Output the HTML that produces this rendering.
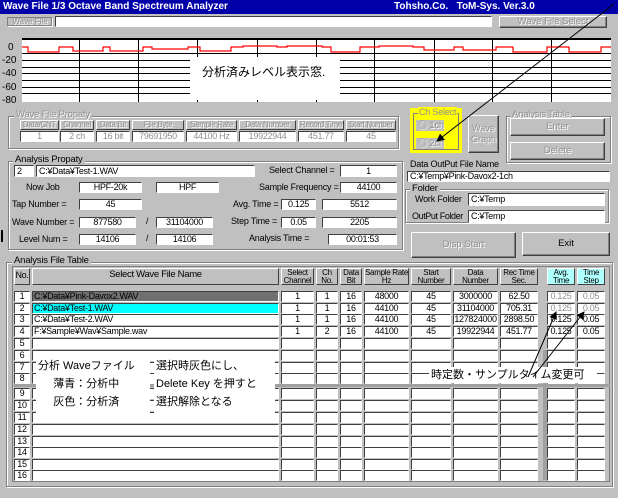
<!DOCTYPE html>
<html><head><meta charset="utf-8"><style>
*{box-sizing:border-box;margin:0;padding:0}
body{width:618px;height:498px;background:#c0c0c0;font-family:"Liberation Sans","Noto Sans CJK JP",sans-serif;font-size:9px;color:#000;position:relative;overflow:hidden}
.a{position:absolute}
.s{position:absolute;background:#fff;border:1px solid;border-color:#404040 #fff #fff #404040;font-size:9px;line-height:9px;text-align:center;white-space:nowrap;overflow:hidden;letter-spacing:-0.3px}
.sl{text-align:left;padding-left:2px}
.g{position:absolute;border:1px solid;border-color:#808080 #fff #fff #808080;box-shadow:inset -1px -1px 0 #808080, inset 1px 1px 0 #fff}
.gl{position:absolute;background:#c0c0c0;padding:0 2px;font-size:9.5px;line-height:10px;letter-spacing:-0.2px}
.b{position:absolute;background:#c0c0c0;border:1px solid;border-color:#fff #404040 #404040 #fff;box-shadow:inset -1px -1px 0 #808080;text-align:center;font-size:9.5px;color:#909090;text-shadow:1px 1px 0 #fff}
.d{color:#909090;text-shadow:1px 1px 0 #fff}
.h{position:absolute;background:#c0c0c0;border:1px solid;border-color:#fff #404040 #404040 #fff;font-size:8px;line-height:8px;text-align:center;overflow:hidden;letter-spacing:-0.3px;white-space:nowrap}
.r{position:absolute;left:12px;width:598px;height:11px}
.r div{position:absolute;top:0;height:11px;background:#fff;border:1px solid;border-color:#404040 #fff #fff #404040;font-size:9px;line-height:9px;text-align:center;white-space:nowrap;overflow:hidden;letter-spacing:-0.3px}
.c0{left:2px;width:16px}.c1{left:20px;width:247px;text-align:left!important;padding-left:1px}.c2{left:269px;width:33px}.c3{left:304px;width:22px}.c4{left:328px;width:22px}.c5{left:352px;width:45px}.c6{left:399px;width:40px}.c7{left:441px;width:45px}.c8{left:488px;width:38px}.c9{left:535px;width:28px}.c10{left:565px;width:28px}
.lab{position:absolute;font-size:9px;white-space:nowrap;letter-spacing:-0.2px}
.note{position:absolute;background:#fff;font-size:11px;line-height:18px;white-space:nowrap}
</style></head><body>
<div class="a" style="left:0;top:0;width:618px;height:14px;background:#0000a8;color:#fff;font-weight:bold;font-size:10px;line-height:14px;padding-left:3px">Wave File 1/3 Octave Band Spectreum Analyzer<span class="a" style="left:394px;top:0">Tohsho.Co.&nbsp;&nbsp;&nbsp;ToM-Sys. Ver.3.0</span></div>
<div class="b" style="left:7px;top:17px;width:46px;height:10px;font-size:8px;line-height:8px;border-color:#808080 #fff #fff #808080">Wave File</div>
<div class="s" style="left:55px;top:16px;width:437px;height:11px"></div>
<div class="b" style="left:499px;top:16px;width:108px;height:12px;line-height:10px">Wave File Select</div>
<svg class="a" style="left:0;top:36px" width="618" height="68">
<rect x="22" y="2" width="589" height="64" fill="#fff"/>
<g stroke="#000" stroke-width="1">
<line x1="22" y1="3" x2="611" y2="3" stroke-width="2"/>
<line x1="22" y1="17.5" x2="611" y2="17.5"/><line x1="22" y1="24.5" x2="611" y2="24.5"/><line x1="22" y1="31.5" x2="611" y2="31.5"/><line x1="22" y1="37.5" x2="611" y2="37.5"/><line x1="22" y1="44.5" x2="611" y2="44.5"/><line x1="22" y1="51.5" x2="611" y2="51.5"/><line x1="22" y1="57.5" x2="611" y2="57.5"/>
<line x1="79.5" y1="3" x2="79.5" y2="66"/><line x1="138.5" y1="3" x2="138.5" y2="66"/><line x1="197.5" y1="3" x2="197.5" y2="66"/><line x1="257.5" y1="3" x2="257.5" y2="66"/><line x1="316.5" y1="3" x2="316.5" y2="66"/><line x1="374.5" y1="3" x2="374.5" y2="66"/><line x1="434.5" y1="3" x2="434.5" y2="66"/><line x1="492.5" y1="3" x2="492.5" y2="66"/><line x1="551.5" y1="3" x2="551.5" y2="66"/>
</g>
<path fill="none" stroke="#f00" stroke-width="1.2" d="M22 11H28V16H59V11H73V15H103V11H110V15H143V11H152V13H188V11H200V15H231V11H243V10H277V11H287V10H322V11H331V16H360V11H379V10H413V11H424V14H454V11H463V14H496V11H513V16H547V11H569V16H601V11H611"/>
<text x="8" y="14" font-size="10" font-family="Liberation Sans">0</text>
<text x="2" y="27" font-size="10" font-family="Liberation Sans">-20</text>
<text x="2" y="40" font-size="10" font-family="Liberation Sans">-40</text>
<text x="2" y="54" font-size="10" font-family="Liberation Sans">-60</text>
<text x="2" y="67" font-size="10" font-family="Liberation Sans">-80</text>
</svg>
<div class="note" style="left:190px;top:57px;width:150px;height:43px;padding:6px 0 0 12px;font-size:12px">分析済みレベル表示窓.</div>
<div class="g" style="left:8px;top:116px;width:392px;height:34px"></div>
<div class="gl d" style="left:14px;top:110px">Wave File Propaty</div>
<div class="h d" style="left:20px;top:120px;width:39px;height:10px">Data/CNT</div>
<div class="h d" style="left:60px;top:120px;width:34px;height:10px">Channel</div>
<div class="h d" style="left:96px;top:120px;width:34px;height:10px">Data Bit</div>
<div class="h d" style="left:132px;top:120px;width:52px;height:10px">File Byte</div>
<div class="h d" style="left:186px;top:120px;width:51px;height:10px">Sample Rate</div>
<div class="h d" style="left:239px;top:120px;width:57px;height:10px">Data Number</div>
<div class="h d" style="left:298px;top:120px;width:46px;height:10px">Record Time</div>
<div class="h d" style="left:346px;top:120px;width:50px;height:10px">Start Number</div>
<div class="s d" style="left:20px;top:131px;width:39px;height:11px">1</div>
<div class="s d" style="left:60px;top:131px;width:34px;height:11px">2 ch</div>
<div class="s d" style="left:96px;top:131px;width:34px;height:11px">16 bit</div>
<div class="s d" style="left:132px;top:131px;width:52px;height:11px">79691950</div>
<div class="s d" style="left:186px;top:131px;width:51px;height:11px">44100 Hz</div>
<div class="s d" style="left:239px;top:131px;width:57px;height:11px">19922944</div>
<div class="s d" style="left:298px;top:131px;width:46px;height:11px">451.77</div>
<div class="s d" style="left:346px;top:131px;width:50px;height:11px">45</div>
<div class="a" style="left:410px;top:108px;width:52px;height:45px;background:#ff0"></div>
<div class="a" style="left:413px;top:113px;width:46px;height:37px;border:1px solid #808080"></div>
<div class="lab" style="left:418px;top:107px;background:#ff0;padding:0 1px;color:#909090">Ch Select</div>
<div class="a d" style="left:416px;top:120px;width:28px;height:11px;background:#c0c0c0;font-size:9px;line-height:11px;padding-left:2px">◎ 1ch</div>
<div class="a d" style="left:416px;top:138px;width:28px;height:11px;background:#c0c0c0;font-size:9px;line-height:11px;padding-left:2px">◎ 2ch</div>
<div class="b" style="left:468px;top:115px;width:31px;height:38px;font-size:9px;line-height:11px;padding-top:7px">Wave<br>Graph</div>
<div class="g" style="left:506px;top:116px;width:106px;height:48px"></div>
<div class="gl d" style="left:510px;top:110px">Analysis Table</div>
<div class="b" style="left:510px;top:118px;width:95px;height:18px;line-height:15px">Enter</div>
<div class="b" style="left:510px;top:142px;width:95px;height:18px;line-height:15px">Delete</div>
<div class="g" style="left:8px;top:161px;width:396px;height:90px"></div>
<div class="gl" style="left:13px;top:155px">Analysis Propaty</div>
<div class="s sl" style="left:14px;top:165px;width:20px;height:12px;line-height:10px">2</div>
<div class="s sl" style="left:36px;top:165px;width:219px;height:12px;line-height:10px">C:¥Data¥Test-1.WAV</div>
<div class="lab" style="left:269px;top:165px">Select Channel =</div>
<div class="s" style="left:340px;top:165px;width:57px;height:12px;line-height:10px">1</div>
<div class="lab" style="left:26px;top:182px">Now Job</div>
<div class="s" style="left:79px;top:182px;width:63px;height:11px">HPF-20k</div>
<div class="s" style="left:156px;top:182px;width:63px;height:11px">HPF</div>
<div class="lab" style="left:259px;top:182px">Sample Frequency =</div>
<div class="s" style="left:340px;top:182px;width:57px;height:11px">44100</div>
<div class="lab" style="left:12px;top:199px">Tap Number =</div>
<div class="s" style="left:79px;top:199px;width:63px;height:11px">45</div>
<div class="lab" style="left:233px;top:199px">Avg. Time =</div>
<div class="s" style="left:281px;top:199px;width:35px;height:11px">0.125</div>
<div class="s" style="left:322px;top:199px;width:75px;height:11px">5512</div>
<div class="lab" style="left:12px;top:217px">Wave Number =</div>
<div class="s" style="left:79px;top:217px;width:57px;height:11px">877580</div>
<div class="lab" style="left:146px;top:216px">/</div>
<div class="s" style="left:156px;top:217px;width:57px;height:11px">31104000</div>
<div class="lab" style="left:231px;top:216px">Step Time =</div>
<div class="s" style="left:281px;top:217px;width:35px;height:11px">0.05</div>
<div class="s" style="left:322px;top:217px;width:75px;height:11px">2205</div>
<div class="lab" style="left:19px;top:234px">Level Num =</div>
<div class="s" style="left:79px;top:234px;width:57px;height:11px">14106</div>
<div class="lab" style="left:146px;top:233px">/</div>
<div class="s" style="left:156px;top:234px;width:57px;height:11px">14106</div>
<div class="lab" style="left:249px;top:233px">Analysis Time =</div>
<div class="s" style="left:328px;top:234px;width:69px;height:11px">00:01:53</div>
<div class="a" style="left:1px;top:230px;width:2px;height:12px;background:#000"></div>
<div class="lab" style="left:410px;top:159px">Data OutPut File Name</div>
<div class="s sl" style="left:407px;top:171px;width:203px;height:11px">C:¥Temp¥Pink-Davox2-1ch</div>
<div class="g" style="left:405px;top:189px;width:205px;height:35px"></div>
<div class="gl" style="left:410px;top:184px">Folder</div>
<div class="lab" style="left:415px;top:194px">Work Folder</div>
<div class="s sl" style="left:468px;top:193px;width:137px;height:13px;line-height:11px">C:¥Temp</div>
<div class="lab" style="left:412px;top:211px;letter-spacing:-0.4px">OutPut Folder</div>
<div class="s sl" style="left:468px;top:210px;width:137px;height:13px;line-height:11px">C:¥Temp</div>
<div class="b" style="left:411px;top:232px;width:105px;height:26px;line-height:23px">Disp Start</div>
<div class="b" style="left:522px;top:232px;width:88px;height:24px;line-height:21px;color:#000;text-shadow:none">Exit</div>
<div class="g" style="left:6px;top:262px;width:608px;height:226px"></div>
<div class="gl" style="left:12px;top:256px">Analysis File Table</div>
<div class="a" style="left:12px;top:266px;width:598px;height:216px;border:1px solid #808080"></div>
<div class="h" style="left:14px;top:268px;width:16px;height:17px;font-size:9px;line-height:12px">No.</div>
<div class="h" style="left:32px;top:268px;width:247px;height:17px;font-size:9.5px;line-height:12px">Select Wave File Name</div>
<div class="h" style="left:281px;top:268px;width:33px;height:17px">Select<br>Channel</div>
<div class="h" style="left:316px;top:268px;width:22px;height:17px">Ch<br>No.</div>
<div class="h" style="left:340px;top:268px;width:22px;height:17px">Data<br>Bit</div>
<div class="h" style="left:364px;top:268px;width:45px;height:17px">Sample Rate<br>Hz</div>
<div class="h" style="left:411px;top:268px;width:40px;height:17px">Start<br>Number</div>
<div class="h" style="left:453px;top:268px;width:45px;height:17px">Data<br>Number</div>
<div class="h" style="left:500px;top:268px;width:38px;height:17px">Rec Time<br>Sec.</div>
<div class="h" style="left:547px;top:268px;width:28px;height:17px;background:#b0ffff">Avg.<br>Time</div>
<div class="h" style="left:577px;top:268px;width:28px;height:17px;background:#b0ffff">Time<br>Step</div>
<div class="r" style="top:291px"><div class="c0">1</div><div class="c1" style="background:#707070">C:¥Data¥Pink-Davox2.WAV</div><div class="c2">1</div><div class="c3">1</div><div class="c4">16</div><div class="c5">48000</div><div class="c6">45</div><div class="c7">3000000</div><div class="c8">62.50</div><div class="c9 d">0.125</div><div class="c10 d">0.05</div></div>
<div class="r" style="top:303px"><div class="c0">2</div><div class="c1" style="background:#0ff">C:¥Data¥Test-1.WAV</div><div class="c2">1</div><div class="c3">1</div><div class="c4">16</div><div class="c5">44100</div><div class="c6">45</div><div class="c7">31104000</div><div class="c8">705.31</div><div class="c9 d">0.125</div><div class="c10 d">0.05</div></div>
<div class="r" style="top:314px"><div class="c0">3</div><div class="c1">C:¥Data¥Test-2.WAV</div><div class="c2">1</div><div class="c3">1</div><div class="c4">16</div><div class="c5">44100</div><div class="c6">45</div><div class="c7">127824000</div><div class="c8">2898.50</div><div class="c9">0.125</div><div class="c10">0.05</div></div>
<div class="r" style="top:326px"><div class="c0">4</div><div class="c1">F:¥Sample¥Wav¥Sample.wav</div><div class="c2">1</div><div class="c3">2</div><div class="c4">16</div><div class="c5">44100</div><div class="c6">45</div><div class="c7">19922944</div><div class="c8">451.77</div><div class="c9">0.125</div><div class="c10">0.05</div></div>
<div class="r" style="top:338px"><div class="c0">5</div><div class="c1"></div><div class="c2"></div><div class="c3"></div><div class="c4"></div><div class="c5"></div><div class="c6"></div><div class="c7"></div><div class="c8"></div><div class="c9"></div><div class="c10"></div></div>
<div class="r" style="top:350px"><div class="c0">6</div><div class="c1"></div><div class="c2"></div><div class="c3"></div><div class="c4"></div><div class="c5"></div><div class="c6"></div><div class="c7"></div><div class="c8"></div><div class="c9"></div><div class="c10"></div></div>
<div class="r" style="top:362px"><div class="c0">7</div><div class="c1"></div><div class="c2"></div><div class="c3"></div><div class="c4"></div><div class="c5"></div><div class="c6"></div><div class="c7"></div><div class="c8"></div><div class="c9"></div><div class="c10"></div></div>
<div class="r" style="top:373px"><div class="c0">8</div><div class="c1"></div><div class="c2"></div><div class="c3"></div><div class="c4"></div><div class="c5"></div><div class="c6"></div><div class="c7"></div><div class="c8"></div><div class="c9"></div><div class="c10"></div></div>
<div class="r" style="top:388px"><div class="c0">9</div><div class="c1"></div><div class="c2"></div><div class="c3"></div><div class="c4"></div><div class="c5"></div><div class="c6"></div><div class="c7"></div><div class="c8"></div><div class="c9"></div><div class="c10"></div></div>
<div class="r" style="top:400px"><div class="c0">10</div><div class="c1"></div><div class="c2"></div><div class="c3"></div><div class="c4"></div><div class="c5"></div><div class="c6"></div><div class="c7"></div><div class="c8"></div><div class="c9"></div><div class="c10"></div></div>
<div class="r" style="top:412px"><div class="c0">11</div><div class="c1"></div><div class="c2"></div><div class="c3"></div><div class="c4"></div><div class="c5"></div><div class="c6"></div><div class="c7"></div><div class="c8"></div><div class="c9"></div><div class="c10"></div></div>
<div class="r" style="top:424px"><div class="c0">12</div><div class="c1"></div><div class="c2"></div><div class="c3"></div><div class="c4"></div><div class="c5"></div><div class="c6"></div><div class="c7"></div><div class="c8"></div><div class="c9"></div><div class="c10"></div></div>
<div class="r" style="top:436px"><div class="c0">13</div><div class="c1"></div><div class="c2"></div><div class="c3"></div><div class="c4"></div><div class="c5"></div><div class="c6"></div><div class="c7"></div><div class="c8"></div><div class="c9"></div><div class="c10"></div></div>
<div class="r" style="top:447px"><div class="c0">14</div><div class="c1"></div><div class="c2"></div><div class="c3"></div><div class="c4"></div><div class="c5"></div><div class="c6"></div><div class="c7"></div><div class="c8"></div><div class="c9"></div><div class="c10"></div></div>
<div class="r" style="top:459px"><div class="c0">15</div><div class="c1"></div><div class="c2"></div><div class="c3"></div><div class="c4"></div><div class="c5"></div><div class="c6"></div><div class="c7"></div><div class="c8"></div><div class="c9"></div><div class="c10"></div></div>
<div class="r" style="top:470px"><div class="c0">16</div><div class="c1"></div><div class="c2"></div><div class="c3"></div><div class="c4"></div><div class="c5"></div><div class="c6"></div><div class="c7"></div><div class="c8"></div><div class="c9"></div><div class="c10"></div></div>
<div class="a" style="left:14px;top:384px;width:596px;height:3px;background:#a0a0a0"></div>
<div class="a" style="left:543px;top:350px;width:4px;height:130px;background:#a0a0a0"></div>
<div class="note" style="left:36px;top:357px;width:114px;height:56px;padding-left:2px">分析 Waveファイル<br>&nbsp;&nbsp;&nbsp;&nbsp;&nbsp;薄青：分析中<br>&nbsp;&nbsp;&nbsp;&nbsp;&nbsp;灰色：分析済</div>
<div class="note" style="left:154px;top:357px;width:121px;height:56px;padding-left:2px">選択時灰色にし、<br>Delete Key を押すと<br>選択解除となる</div>
<div class="note" style="left:429px;top:367px;width:168px;height:16px;line-height:16px;padding-left:2px">時定数・サンプルタイム変更可</div>
<svg class="a" style="left:0;top:0" width="618" height="498">
<defs><marker id="m" markerWidth="8" markerHeight="8" refX="7" refY="4" orient="auto"><path d="M0 0L8 4L0 8Z" fill="#000"/></marker></defs>
<line x1="614" y1="4" x2="437" y2="141" stroke="#000" stroke-width="1" marker-end="url(#m)"/>
<line x1="528" y1="377" x2="556" y2="312" stroke="#000" stroke-width="1" marker-end="url(#m)"/>
<line x1="533" y1="377" x2="584" y2="312" stroke="#000" stroke-width="1" marker-end="url(#m)"/>
</svg>
</body></html>
